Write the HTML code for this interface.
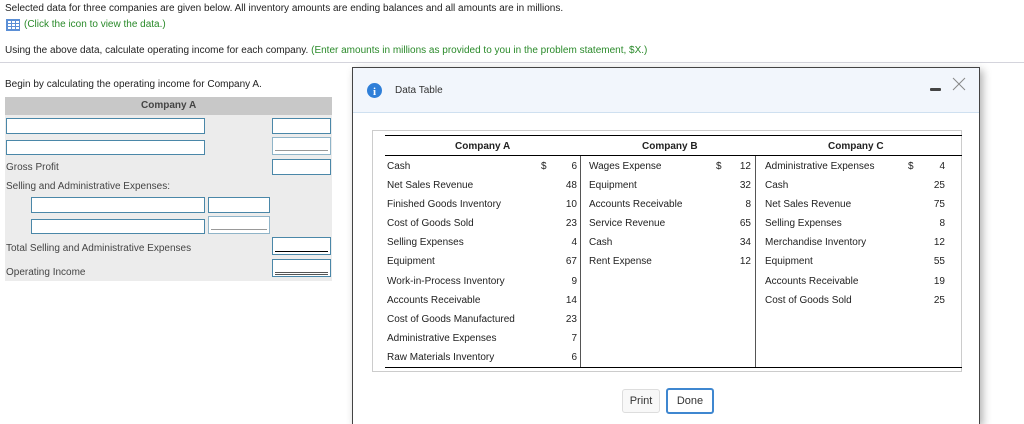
<!DOCTYPE html>
<html style="width:1024px;height:424px;overflow:hidden"><head><meta charset="utf-8"><style>
*{margin:0;padding:0;box-sizing:border-box}
body{width:1024px;height:424px;overflow:hidden;background:#fff;font-family:"Liberation Sans",Arial,sans-serif;font-size:10px;color:#222;position:relative}
.a{position:absolute;white-space:nowrap}
.g{color:#2a8a2a}
.in{position:absolute;background:#fff;border:1px solid #4a87a8}
.in.l{border-color:#8fb4c8}
.t{position:absolute;font-size:10px;color:#222;white-space:nowrap}
.r{text-align:right}
</style></head><body>
<div class="a" style="left:5px;top:3px">Selected data for three companies are given below. All inventory amounts are ending balances and all amounts are in millions.</div>
<svg class="a" style="left:6px;top:19px" width="14" height="12"><rect x="0" y="0" width="14" height="12" fill="#5b8fd6"/><g fill="#fff"><rect x="2" y="2" width="3" height="2"/><rect x="6" y="2" width="3" height="2"/><rect x="10" y="2" width="3" height="2"/><rect x="2" y="5" width="3" height="2"/><rect x="6" y="5" width="3" height="2"/><rect x="10" y="5" width="3" height="2"/><rect x="2" y="8" width="3" height="2"/><rect x="6" y="8" width="3" height="2"/><rect x="10" y="8" width="3" height="2"/></g></svg>
<div class="a g" style="left:24px;top:19px">(Click the icon to view the data.)</div>
<div class="a" style="left:5px;top:45px">Using the above data, calculate operating income for each company. <span class="g">(Enter amounts in millions as provided to you in the problem statement, $X.)</span></div>
<div class="a" style="left:0;top:62px;width:1024px;height:1px;background:#d4d4dc"></div>
<div class="a" style="left:5px;top:79px">Begin by calculating the operating income for Company A.</div>

<div class="a" style="left:5px;top:97px;width:327px;height:184px;background:#ececec"></div>
<div class="a" style="left:5px;top:97px;width:327px;height:18px;background:#c8c8c8;font-weight:bold;color:#444;line-height:18px"><span style="position:absolute;left:136px">Company A</span></div>
<div class="in" style="left:6px;top:118px;width:199px;height:16px"></div>
<div class="in" style="left:272px;top:118px;width:59px;height:16px"></div>
<div class="in" style="left:6px;top:140px;width:199px;height:15px"></div>
<div class="in l" style="left:272px;top:137px;width:59px;height:18px"><div style="position:absolute;left:2px;right:2px;top:12px;height:1px;background:#999"></div></div>
<div class="a" style="left:6px;top:162px;color:#444">Gross Profit</div>
<div class="in" style="left:272px;top:159px;width:59px;height:16px"></div>
<div class="a" style="left:6px;top:181px;color:#444">Selling and Administrative Expenses:</div>
<div class="in" style="left:31px;top:197px;width:174px;height:16px"></div>
<div class="in" style="left:208px;top:197px;width:62px;height:16px"></div>
<div class="in" style="left:31px;top:219px;width:174px;height:15px"></div>
<div class="in l" style="left:208px;top:216px;width:62px;height:18px"><div style="position:absolute;left:2px;right:2px;top:12px;height:1px;background:#999"></div></div>
<div class="a" style="left:6px;top:243px;color:#444">Total Selling and Administrative Expenses</div>
<div class="in" style="left:272px;top:237px;width:59px;height:18px"><div style="position:absolute;left:2px;right:2px;top:13px;height:1px;background:#000"></div></div>
<div class="a" style="left:6px;top:267px;color:#444">Operating Income</div>
<div class="in" style="left:272px;top:259px;width:59px;height:18px"><div style="position:absolute;left:2px;right:2px;top:12px;height:1px;background:#555"></div><div style="position:absolute;left:2px;right:2px;top:14px;height:1px;background:#555"></div></div>

<div class="a" style="left:352px;top:67px;width:628px;height:357px;background:#fff;border:1px solid #444;border-bottom:none;box-shadow:3px 3px 8px rgba(0,0,0,.3)"></div>
<div class="a" style="left:353px;top:68px;width:626px;height:45px;background:#f2f6fc;border-bottom:1px solid #cfe0f0"></div>
<svg class="a" style="left:367px;top:83px" width="15" height="15"><circle cx="7.5" cy="7.5" r="7.5" fill="#2f7fd8"/><text x="7.5" y="12" font-size="11" font-weight="bold" fill="#fff" text-anchor="middle" font-family="Liberation Serif">i</text></svg>
<div class="a" style="left:395px;top:85px;font-size:10px;color:#333">Data Table</div>
<div class="a" style="left:930px;top:88px;width:11px;height:3px;background:#444;border-radius:1px"></div>
<svg class="a" style="left:952px;top:77px" width="14" height="14"><path d="M1 1L13 13M13 1L1 13" stroke="#888" stroke-width="1"/></svg>
<div class="a" style="left:372px;top:130px;width:590px;height:242px;border:1px solid #ccc"></div>
<div class="a" style="left:385px;top:135px;width:577px;height:1px;background:#000"></div>
<div class="a" style="left:385px;top:155px;width:577px;height:1px;background:#000"></div>
<div class="a" style="left:385px;top:367px;width:577px;height:1px;background:#000"></div>
<div class="a" style="left:580px;top:156px;width:1px;height:211px;background:#555"></div>
<div class="a" style="left:755px;top:156px;width:1px;height:211px;background:#555"></div>
<div class="t" style="left:455px;top:141px;font-weight:bold">Company A</div>
<div class="t" style="left:642px;top:141px;font-weight:bold">Company B</div>
<div class="t" style="left:828px;top:141px;font-weight:bold">Company C</div>

<div class="t" style="left:387px;top:161px">Cash</div><div class="t" style="left:541px;top:161px">$</div><div class="t r" style="left:557px;top:161px;width:20px">6</div>
<div class="t" style="left:387px;top:180px">Net Sales Revenue</div><div class="t r" style="left:557px;top:180px;width:20px">48</div>
<div class="t" style="left:387px;top:199px">Finished Goods Inventory</div><div class="t r" style="left:557px;top:199px;width:20px">10</div>
<div class="t" style="left:387px;top:218px">Cost of Goods Sold</div><div class="t r" style="left:557px;top:218px;width:20px">23</div>
<div class="t" style="left:387px;top:237px">Selling Expenses</div><div class="t r" style="left:557px;top:237px;width:20px">4</div>
<div class="t" style="left:387px;top:256px">Equipment</div><div class="t r" style="left:557px;top:256px;width:20px">67</div>
<div class="t" style="left:387px;top:276px">Work-in-Process Inventory</div><div class="t r" style="left:557px;top:276px;width:20px">9</div>
<div class="t" style="left:387px;top:295px">Accounts Receivable</div><div class="t r" style="left:557px;top:295px;width:20px">14</div>
<div class="t" style="left:387px;top:314px">Cost of Goods Manufactured</div><div class="t r" style="left:557px;top:314px;width:20px">23</div>
<div class="t" style="left:387px;top:333px">Administrative Expenses</div><div class="t r" style="left:557px;top:333px;width:20px">7</div>
<div class="t" style="left:387px;top:352px">Raw Materials Inventory</div><div class="t r" style="left:557px;top:352px;width:20px">6</div>

<div class="t" style="left:589px;top:161px">Wages Expense</div><div class="t" style="left:716px;top:161px">$</div><div class="t r" style="left:731px;top:161px;width:20px">12</div>
<div class="t" style="left:589px;top:180px">Equipment</div><div class="t r" style="left:731px;top:180px;width:20px">32</div>
<div class="t" style="left:589px;top:199px">Accounts Receivable</div><div class="t r" style="left:731px;top:199px;width:20px">8</div>
<div class="t" style="left:589px;top:218px">Service Revenue</div><div class="t r" style="left:731px;top:218px;width:20px">65</div>
<div class="t" style="left:589px;top:237px">Cash</div><div class="t r" style="left:731px;top:237px;width:20px">34</div>
<div class="t" style="left:589px;top:256px">Rent Expense</div><div class="t r" style="left:731px;top:256px;width:20px">12</div>

<div class="t" style="left:765px;top:161px">Administrative Expenses</div><div class="t" style="left:908px;top:161px">$</div><div class="t r" style="left:925px;top:161px;width:20px">4</div>
<div class="t" style="left:765px;top:180px">Cash</div><div class="t r" style="left:925px;top:180px;width:20px">25</div>
<div class="t" style="left:765px;top:199px">Net Sales Revenue</div><div class="t r" style="left:925px;top:199px;width:20px">75</div>
<div class="t" style="left:765px;top:218px">Selling Expenses</div><div class="t r" style="left:925px;top:218px;width:20px">8</div>
<div class="t" style="left:765px;top:237px">Merchandise Inventory</div><div class="t r" style="left:925px;top:237px;width:20px">12</div>
<div class="t" style="left:765px;top:256px">Equipment</div><div class="t r" style="left:925px;top:256px;width:20px">55</div>
<div class="t" style="left:765px;top:276px">Accounts Receivable</div><div class="t r" style="left:925px;top:276px;width:20px">19</div>
<div class="t" style="left:765px;top:295px">Cost of Goods Sold</div><div class="t r" style="left:925px;top:295px;width:20px">25</div>

<div class="a" style="left:622px;top:389px;width:38px;height:24px;border:1px solid #ddd;border-radius:3px;background:#f8f8f8;text-align:center;line-height:22px;font-size:11px;color:#333">Print</div>
<div class="a" style="left:666px;top:388px;width:48px;height:26px;border:2px solid #3f87d0;border-radius:3px;background:#fff;text-align:center;line-height:22px;font-size:11px;color:#333">Done</div>
</body></html>
